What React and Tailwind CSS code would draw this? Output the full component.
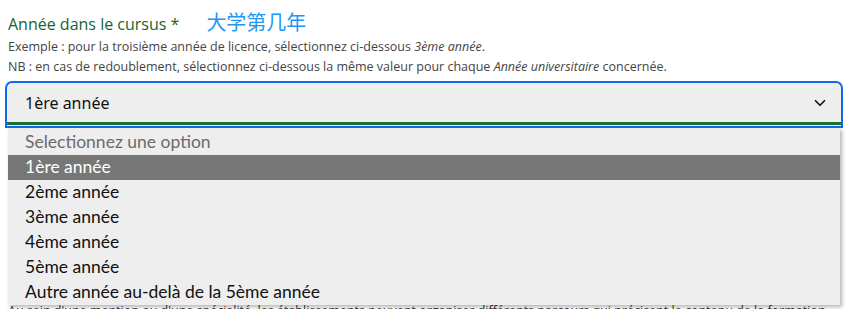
import { ChevronDown } from 'lucide-react';

const options = [
    '1ère année',
    '2ème année',
    '3ème année',
    '4ème année',
    '5ème année',
    'Autre année au-delà de la 5ème année',
];

const App = () => {
    return (
        <div className="w-[847px] h-[309px] overflow-hidden bg-white">
            <div className="px-[8px] pt-[10px]">
                {/* Label */}
                <div className="flex items-end h-[24px]">
                    <span className="text-[16px] text-[#17652f] font-['Open_Sans',sans-serif] leading-[20px]">
                        Année dans le cursus *
                    </span>
                    <span className="ml-[27px] text-[20px] text-[#2196f3] font-['Noto_Sans_CJK_SC',sans-serif] leading-[24px]">
                        大学第几年
                    </span>
                </div>

                {/* Help text */}
                <div className="mt-[3px] text-[12.5px] leading-[20px] text-[#444] font-['Open_Sans',sans-serif]">
                    <p>
                        Exemple : pour la troisième année de licence, sélectionnez ci-dessous <i>3ème année</i>.
                    </p>
                    <p>
                        NB : en cas de redoublement, sélectionnez ci-dessous la même valeur pour chaque{' '}
                        <i>Année universitaire</i> concernée.
                    </p>
                </div>
            </div>

            {/* Select */}
            <div className="relative mt-[4px] ml-[5px] w-[838px]">
                <div className="h-[47px] border-2 border-[#0f6be8] rounded-t-[7px] bg-[#eeeeee] flex flex-col">
                    <div className="flex-1 flex items-center justify-between pl-[18px] pr-[12px]">
                        <span className="text-[16px] text-[#111] font-['Noto_Sans',sans-serif]">1ère année</span>
                        <ChevronDown className="w-[18px] h-[18px] text-[#111]" strokeWidth={2.2} />
                    </div>
                    <div className="h-[3px] bg-[#1b6e35] mb-[1px]" />
                </div>

                {/* Dropdown list */}
                <div className="absolute left-[3px] top-[47px] w-[832px] bg-[#eeeeee] pt-[2px] shadow-[2px_2px_4px_rgba(0,0,0,0.3)] z-10 font-['Lato',sans-serif] text-[17.5px]">
                    <div className="h-[25px] flex items-center pl-[17px] text-[#6b6b6b]">
                        Selectionnez une option
                    </div>
                    {options.map((o, i) => (
                        <div
                            key={o}
                            className={`h-[25px] flex items-center pl-[17px] ${
                                i === 0 ? 'bg-[#777777] text-white' : 'text-[#111]'
                            }`}
                        >
                            {o}
                        </div>
                    ))}
                </div>

                {/* Text hidden under the list */}
                <p className="mt-[174px] px-[3px] text-[12.5px] text-[#333] font-['Open_Sans',sans-serif] leading-[18px] whitespace-nowrap">
                    Au sein d'une mention ou d'une spécialité, les établissements peuvent organiser différents parcours qui précisent le contenu de la formation.
                </p>
            </div>
        </div>
    );
};

export default App;
